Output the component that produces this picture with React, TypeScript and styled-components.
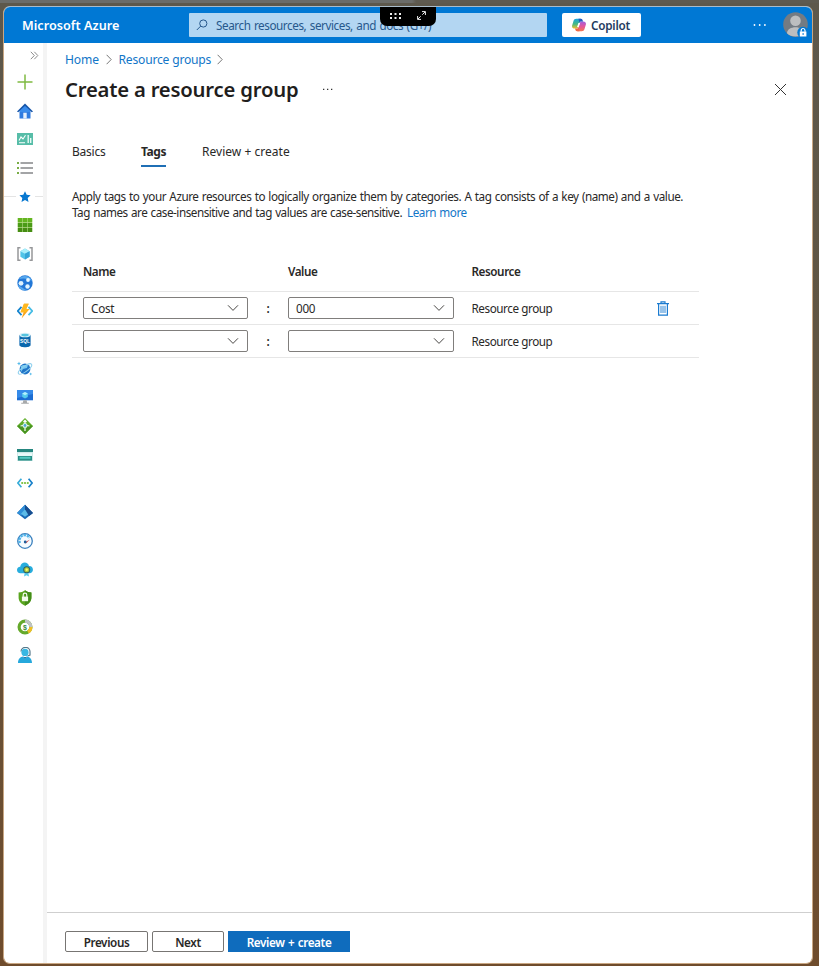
import React from "react";
import styled, { createGlobalStyle } from "styled-components";

const Global = createGlobalStyle`
  * { box-sizing: border-box; }
  body { margin: 0; background: #625848; font-family: "Noto Sans", "Open Sans", sans-serif; font-size: 11.7px; color: #292827; }
  button { font: inherit; }
`;

const Desktop = styled.div`
  width: 819px; height: 966px; padding: 6px 6px 2px 3px; overflow: hidden;
  background:
    linear-gradient(90deg, #6b6c69 0 412px, #5e5a50 416px) top / 100% 3px no-repeat,
    linear-gradient(180deg, #5d584c 0, #62543f 45%, #6f4c2c 100%);
  position: relative;
`;
const Window = styled.div`
  height: 958px; border: 1px solid #c9a783; border-top-color: #a9bccb; border-radius: 7px;
  background: #fff; overflow: hidden; display: flex; flex-direction: column;
`;
const Header = styled.header`
  height: 36px; flex: none; background: #0078d4; color: #fff;
  display: flex; align-items: center; padding-left: 18px;
`;
const Brand = styled.div`
  width: 167px; font-size: 12.6px; font-weight: 600; letter-spacing: 0.04px; white-space: nowrap;
`;
const Search = styled.div`
  width: 358px; height: 24px; background: #b3d6f2; color: #27588c; border-radius: 1px;
  display: flex; align-items: center; padding-left: 7px; gap: 8px; white-space: nowrap; letter-spacing: -0.42px; word-spacing: 0.8px;
`;
const Copilot = styled.button`
  margin: 0 0 0 15px; padding: 0 0 0 10px; width: 79px; height: 24px; border: 0; border-radius: 2px; background: #fff;
  color: #243a5e; font-weight: 600; display: flex; align-items: center; gap: 5px; letter-spacing: -0.22px;
`;
const HeaderMore = styled.div`margin-left: 112px; width: 14px; height: 14px; display: flex;`;
const Avatar = styled.div`margin-left: 16px; width: 26px; height: 26px; display: flex;`;
const ShareHandle = styled.div`
  position: absolute; left: 380px; top: 7px; width: 56px; height: 19px; background: #000;
  border-radius: 0 0 7px 7px; display: flex; justify-content: space-between; align-items: center; padding: 0 10px 2px;
`;
const Body = styled.div`flex: 1; min-height: 0; display: flex;`;
const Sidebar = styled.nav`
  width: 43px; flex: none; border-right: 4px solid #f4f4f4; display: flex; flex-direction: column; align-items: stretch;
`;
const Expand = styled.div`height: 24.6px; padding: 8px 0 0 26px; display: flex; align-items: flex-start;`;
const SideItem = styled.div<{ $ruled?: boolean }>`
  height: 28.68px; flex: none; padding-left: 13px; display: flex; align-items: center;
  background: ${(p) =>
    p.$ruled
      ? "linear-gradient(90deg, #e4e4e4 0 12px, transparent 12px 31px, #e4e4e4 31px) 0 14px / 100% 1px no-repeat"
      : "none"};
`;
const Main = styled.main`flex: 1; min-width: 0; display: flex; flex-direction: column;`;
const Crumbs = styled.div`
  height: 33px; padding-left: 18px; display: flex; align-items: center; color: #1276c8; font-size: 12.1px;
`;
const Crumb = styled.span<{ $w: number; $ls: number }>`width: ${(p) => p.$w}px; letter-spacing: ${(p) => p.$ls}px; white-space: nowrap;`;
const CrumbArrow = styled.span`width: 20px; display: flex; justify-content: center;`;
const TitleRow = styled.div`height: 26px; padding: 0 25px 0 18px; display: flex; align-items: center;`;
const Title = styled.h1`
  margin: 0; width: 257px; font-size: 20.3px; line-height: 26px; font-weight: 600; letter-spacing: -0.21px; white-space: nowrap; color: #1f1e1d;
`;
const TitleMore = styled.div`height: 14px; display: flex; flex: 1;`;
const Tabs = styled.div`height: 51px; margin: 35px 0 0 25px; display: flex; gap: 36px; font-size: 12px;`;
const Tab = styled.div<{ $active?: boolean; $w: number; $ls: number }>`
  width: ${(p) => p.$w}px; height: 30px; line-height: 29px; white-space: nowrap; letter-spacing: ${(p) => p.$ls}px;
  border-bottom: 2px solid ${(p) => (p.$active ? "#1f6fb5" : "transparent")};
  font-weight: ${(p) => (p.$active ? 700 : 400)};
`;
const Intro = styled.p<{ $ls: number }>`
  margin: 0 0 0 25px; line-height: 16px; white-space: nowrap; letter-spacing: ${(p) => p.$ls}px; word-spacing: 0.7px;
`;
const Link = styled.span`color: #1276c8; margin-left: 5px;`;
const Table = styled.div`width: 627px; margin: 32px 0 0 25px;`;
const Row = styled.div<{ $head?: boolean }>`
  height: ${(p) => (p.$head ? 40 : 33)}px; border-bottom: 1px solid #e6e6e6; padding: 0 0 ${(p) => (p.$head ? 1 : 0)}px 11px;
  display: grid; grid-template-columns: 165px 40px 166px 17.5px 185.5px 1fr; align-items: center;
  font-weight: ${(p) => (p.$head ? 600 : 400)}; white-space: nowrap; letter-spacing: -0.43px;
`;
const Combo = styled.div`
  height: 22px; border: 1px solid #807e7c; border-radius: 2px; padding: 0 8px 0 7px; display: flex; align-items: center; justify-content: space-between;
  letter-spacing: -0.25px;
`;
const Center = styled.div`text-align: center; font-weight: 600;`;
const Footer = styled.footer`
  margin-top: auto; height: 51px; border-top: 1px solid #cfcfcf; padding: 18px 0 0 18px; display: flex; gap: 4px;
`;
const Button = styled.button<{ $w: number; $primary?: boolean }>`
  width: ${(p) => p.$w}px; height: 21px; padding: 1px 0 0; border-radius: ${(p) => (p.$primary ? 0 : 2)}px; line-height: 17px; font-weight: 600; white-space: nowrap;
  letter-spacing: -0.38px; word-spacing: 0.8px;
  border: 1px solid ${(p) => (p.$primary ? "#0f6cbd" : "#777573")};
  background: ${(p) => (p.$primary ? "#0f6cbd" : "#fff")}; color: ${(p) => (p.$primary ? "#fff" : "#292827")};
`;

const Svg = ({ children, size = 16 }: { children: React.ReactNode; size?: number }) => (
  <svg width={size} height={size} viewBox="0 0 16 16" fill="none">{children}</svg>
);
const Dots = ({ color }: { color: string }) => (
  <svg width="14" height="14" viewBox="0 0 14 14" fill={color}>
    <circle cx="1.5" cy="7" r="0.9" /><circle cx="6.7" cy="7" r="0.9" /><circle cx="11.9" cy="7" r="0.9" />
  </svg>
);
const Chevron = () => (
  <svg width="12" height="8" viewBox="0 0 12 8" fill="none" stroke="#4a4846"><path d="M1 1.3 6 6.4 11 1.3" /></svg>
);

const icons: React.ReactNode[] = [
  <path d="M8 .5v15M.5 8h15" stroke="#7fba42" strokeWidth="1.5" />,
  <>
    <path d="M2.5 7v8.5h11V7L8 2z" fill="#2f7be0" />
    <path d="M6.3 9.8h3.4v5.7H6.3z" fill="#e4f0fc" />
    <path d="M0 8.5 8 .4l8 8.1-1.2.8L8 3.2 1.2 9.3z" fill="#1555a8" />
    <path d="M3 7.5 8 3l5 4.5V9H3z" fill="#398cec" />
  </>,
  <>
    <path d="M0 2h16v12H0z" fill="#57bda8" />
    <path d="M2 9.5 4 6l2 2 2.5-3.8M2 11.8h6" stroke="#fff" strokeWidth="1.1" />
    <path d="M10.5 4h1.4v8h-1.4zM13 7h1.4v5H13z" fill="#e8fbf6" />
  </>,
  <>
    <path d="M3.5 3H16M3.5 8H16M3.5 13H16" stroke="#858789" strokeWidth="1.5" />
    <path d="M0 2h2v2H0zM0 7h2v2H0zM0 12h2v2H0z" fill="#79ad46" />
  </>,
  <path d="m8 2.2 1.7 3.6 3.9.5-2.9 2.7.8 3.9L8 11l-3.5 1.9.8-3.9-2.9-2.7 3.9-.5z" fill="#0878d0" />,
  <>
    <path d="M.8 1h14.4v14H.8z" fill="#b8dc8d" />
    <path d="M.8 1h4.4v4.2H.8zM5.8 1h4.4v4.2H5.8zM10.8 1h4.4v4.2h-4.4z" fill="#64b520" />
    <path d="M.8 5.9h4.4v4.2H.8zM5.8 5.9h4.4v4.2H5.8zM10.8 5.9h4.4v4.2h-4.4z" fill="#4b9b17" />
    <path d="M.8 10.8h4.4V15H.8zM5.8 10.8h4.4V15H5.8zM10.8 10.8h4.4V15h-4.4z" fill="#468d13" />
  </>,
  <>
    <path d="M3.5 1.7H1v12.6h2.5M12.5 1.7H15v12.6h-2.5" stroke="#969799" strokeWidth="1.5" />
    <path d="m8 2.6 4.6 2.6v5.6L8 13.4l-4.6-2.6V5.2z" fill="#50c4e8" />
    <path d="m8 2.6 4.6 2.6L8 7.8 3.4 5.2z" fill="#a9effa" /><path d="M8 7.8v5.6l4.6-2.6V5.2z" fill="#35a5d6" />
  </>,
  <>
    <circle cx="8" cy="8" r="7.7" fill="#2378d7" />
    <path d="M2 4C6-1 13 1 15 6c-5-3-9-3-13-2M1 10c4 2 7 5 9 5-5 1-8-1-9-5" fill="#58a9ee" />
    <circle cx="4" cy="8.3" r="2.4" fill="#dff3ff" /><circle cx="11" cy="5" r="1.9" fill="#e9f8ff" /><circle cx="10.5" cy="11.5" r="2.2" fill="#e0f4ff" />
  </>,
  <>
    <path d="M4.5 3.8.8 8l3.7 4.2" stroke="#1685ce" strokeWidth="1.8" />
    <path d="M11.5 3.8 15.2 8l-3.7 4.2" stroke="#46bce5" strokeWidth="1.8" />
    <path d="M7 .7h4.7L9.2 6h3.3L4.6 15.4l2-6.2H3.5z" fill="#f7a51c" />
    <path d="M7 .7h4.7L9.2 6h3.3L9 9.3H3.5z" fill="#ffb81f" />
  </>,
  <>
    <path d="M2.4 3v10c0 3 11.2 3 11.2 0V3z" fill="#0a67ad" />
    <ellipse cx="8" cy="3" rx="5.6" ry="2.3" fill="#d9f1f8" /><ellipse cx="8" cy="3.1" rx="3.8" ry="1.3" fill="#57c4df" />
    <text x="8" y="10.8" textAnchor="middle" fontFamily="Liberation Sans" fontWeight="700" fontSize="4.8" fill="#fff">SQL</text>
  </>,
  <>
    <circle cx="8" cy="8" r="5.4" fill="#2174c7" /><path d="M4 5c3-2 5 0 7-1l-1 3-4 1-2 3z" fill="#75c8ef" />
    <ellipse cx="8" cy="8" rx="8" ry="2.6" transform="rotate(-36 8 8)" stroke="#8fd0ee" strokeWidth="1.1" />
    <path d="M2 .6 2.6 2l1.4.6-1.4.6L2 4.6l-.6-1.4L0 2.6 1.4 2zM13.7 11.5l.5 1 1 .5-1 .5-.5 1-.5-1-1-.5 1-.5z" fill="#52b9e9" />
  </>,
  <>
    <path d="M0 1h16v10.3H0z" fill="#1c6dd2" /><path d="M0 1h16v4L0 9z" fill="#368be9" />
    <path d="m8 3 2.8 1.6v3.3L8 9.6 5.2 7.9V4.6z" fill="#54cbed" /><path d="m8 3 2.8 1.6L8 6.3 5.2 4.6z" fill="#b3f1fc" />
    <path d="M6.3 11.3h3.4l.4 2.5h1.7v1H4.2v-1h1.7z" fill="#a7a9ab" />
  </>,
  <>
    <path d="m8 0 8 8-8 8-8-8z" fill="#5fae26" /><path d="m0 8 8 8 8-8-8-2z" fill="#489420" />
    <path d="M8 10v3M6 7.5 3.5 8M10 7.5l2.5.5M8 2.5v3M6.5 4 8 2.3 9.5 4" stroke="#fff" strokeWidth="1.2" />
    <circle cx="8" cy="7.5" r="2.5" fill="#ddf5df" /><circle cx="8" cy="7.5" r="1.4" fill="#4fa9d7" />
  </>,
  <>
    <path d="M0 2h16v3H0z" fill="#25867f" /><path d="M0 5h16v9H0z" fill="#cfe9e8" />
    <path d="M1 6.2h14v2.6H1z" fill="#e9fbfa" /><path d="M1 9h14v4.6H1z" fill="#278e86" /><path d="M2.5 9.8h11v2H2.5z" fill="#53c9c1" />
  </>,
  <>
    <path d="M4.4 3.7.9 8l3.5 4.3" stroke="#36acd8" strokeWidth="1.7" /><path d="M11.6 3.7 15.1 8l-3.5 4.3" stroke="#1881ca" strokeWidth="1.7" />
    <circle cx="5.2" cy="8" r="1.1" fill="#76bd36" /><circle cx="8" cy="8" r="1.1" fill="#76bd36" /><circle cx="10.8" cy="8" r="1.1" fill="#76bd36" />
  </>,
  <>
    <path d="M8 .8 16 9l-8 6.2L0 9z" fill="#1969b5" /><path d="M8 .8 0 9l4 2.6 8-6.7z" fill="#2f8fd8" />
    <path d="m8 5.2 4 4.5-4 3-4-3z" fill="#5cbbe8" /><path d="M8 .8 16 9l-4 3-4-6.8z" fill="#174d8f" />
  </>,
  <>
    <circle cx="8" cy="8" r="7.3" fill="#f5fbff" stroke="#3b80be" strokeWidth="1.3" />
    <path d="M3 10A5.2 5.2 0 0 1 12.5 5" stroke="#52b4e9" strokeWidth="2.4" strokeDasharray="2.4 .8" />
    <path d="m8 9.3 5-2.7-4.1 4z" fill="#df4c48" /><circle cx="8.2" cy="9" r="1.4" fill="#205e9b" />
  </>,
  <>
    <path d="M3.5 12.3C-1.5 11.8-.7 5.7 3.2 5.7 4.3.2 11.2.5 12 5.1c5-.2 5.3 6.8.5 7.2z" fill="#28addd" />
    <path d="m8 10-1 5.4 2.5-1.2 2.5 1.2-1-5.4z" fill="#54caed" /><circle cx="9.7" cy="8.7" r="3.5" fill="#315f61" />
    <circle cx="9.7" cy="8.7" r="2.5" fill="#a6c93c" /><circle cx="9.7" cy="8.7" r="1.2" fill="#fff36b" />
  </>,
  <>
    <path d="M8 .3c2 1.7 4 2 6.4 2.1v5.2c0 4.2-2.8 6.4-6.4 8.2-3.6-1.8-6.4-4-6.4-8.2V2.4C4 2.3 6 2 8 .3" fill="#5aa51f" />
    <path d="M8 .3C10 2 12 2.3 14.4 2.4v5.2c0 4.2-2.8 6.4-6.4 8.2z" fill="#438d18" />
    <path d="M4.9 6.6h6.2v4.6H4.9z" fill="#f3fbed" /><path d="M6.2 7V5a1.8 1.8 0 0 1 3.6 0v2" stroke="#f3fbed" strokeWidth="1.2" />
  </>,
  <>
    <circle cx="8" cy="8" r="5.9" fill="#fff" stroke="#65a92b" strokeWidth="3.2" />
    <path d="M8 2.1A5.9 5.9 0 0 1 13.9 8" stroke="#c0c2c4" strokeWidth="3.2" /><path d="M13.9 8A5.9 5.9 0 0 1 11 13.1" stroke="#f0bf24" strokeWidth="3.2" />
    <text x="8" y="10.6" textAnchor="middle" fontFamily="Liberation Sans" fontWeight="700" fontSize="7" fill="#3b8a3e">$</text>
  </>,
  <>
    <path d="M4 4.5a4.3 4.3 0 0 1 9 .6V8L10.5 9" stroke="#56788a" strokeWidth="1.2" />
    <circle cx="8" cy="5.4" r="3.6" fill="#37b7e3" /><path d="M1 16c0-4.5 2.8-6.3 4.8-6.6L8 11.7l2.2-2.3c2 .3 4.8 2.1 4.8 6.6z" fill="#26a8dc" />
    <path d="m5.8 9.4 2.2.8 2.2-.8L8 12z" fill="#136ea8" />
  </>,
];

const CopilotLogo = () => (
  <Svg size={14}>
    <defs>
      <linearGradient id="cool" x1="0" y1="0" x2="0" y2="1"><stop stopColor="#18a6e0" /><stop offset=".55" stopColor="#45b984" /><stop offset="1" stopColor="#f0c12e" /></linearGradient>
      <linearGradient id="warm" x1="0" y1="0" x2="0" y2="1"><stop stopColor="#a05fe0" /><stop offset=".5" stopColor="#e4569c" /><stop offset="1" stopColor="#f4774e" /></linearGradient>
    </defs>
    <path d="M5 .8h5L7.2 9.8C6.7 11.4 6.2 12 4.8 12H3C.6 12-.4 10.2.2 8.2l1.5-4.9C2.2 1.6 3.2.8 5 .8" fill="url(#cool)" />
    <path d="M11 15.2H6l2.8-9C9.3 4.6 9.8 4 11.2 4H13c2.4 0 3.4 1.8 2.8 3.8l-1.5 4.9c-.5 1.7-1.5 2.5-3.3 2.5" fill="url(#warm)" />
    <path d="M7.4.8h2.8c1.5 0 1.9 1.4 2.5 3.2h-2c-1.3 0-1.7.6-2.1 1.8z" fill="#2458bf" />
    <path d="M8.6 15.2H5.8c-1.5 0-1.9-1.4-2.4-3.2h1.8c1.2 0 1.7-.6 2.1-1.8z" fill="#ee6a45" />
    <path d="m7.3 5.6 1.9.1-1.5 4.7-1.9-.1z" fill="#fff" />
  </Svg>
);

const Trash = () => (
  <svg width="12" height="15" viewBox="0 0 12 15" fill="none" stroke="#1b7bd0" strokeWidth="1.2">
    <path d="M0 2.6h12M4 2.3V.8h4v1.5M1.6 2.6v11.6h8.8V2.6" /><path d="M4 4.8V12M6 4.8V12M8 4.8V12" strokeWidth="0.9" />
  </svg>
);

export default function App() {
  return (
    <Desktop>
      <Global />
      <Window>
        <Header>
          <Brand>Microsoft Azure</Brand>
          <Search>
            <svg width="12" height="12" viewBox="0 0 12 12" fill="none" stroke="#27588c"><circle cx="7.3" cy="4.5" r="3.6" /><path d="M4.7 7.1.8 11" /></svg>
            Search resources, services, and docs (G+/)
          </Search>
          <Copilot><CopilotLogo />Copilot</Copilot>
          <HeaderMore><Dots color="#fff" /></HeaderMore>
          <Avatar>
            <svg width="26" height="26" viewBox="0 0 26 26">
              <circle cx="12.5" cy="12.5" r="12.3" fill="#737b83" /><circle cx="12.5" cy="8.7" r="5.3" fill="#bcbec0" />
              <path d="M4 21.2c0-8 17-8 17 0-4 4.3-13 4.3-17 0" fill="#bcbec0" />
              <circle cx="20" cy="20.5" r="5.7" fill="#0078d4" /><path d="M16.8 19.5h6.6v5h-6.6z" fill="#fff" />
              <path d="M18.2 19.7v-1.3a1.9 1.9 0 0 1 3.8 0v1.3" fill="none" stroke="#fff" strokeWidth="1.2" /><path d="M20.1 21v2" stroke="#0078d4" />
            </svg>
          </Avatar>
        </Header>
        <Body>
          <Sidebar>
            <Expand><svg width="9" height="9" viewBox="0 0 9 9" fill="none" stroke="#8b8b8b"><path d="m.8.8 3.5 3.7L.8 8.2M4.3.8l3.5 3.7-3.5 3.7" /></svg></Expand>
            {icons.map((icon, i) => <SideItem key={i} $ruled={i === 4}><Svg>{icon}</Svg></SideItem>)}
          </Sidebar>
          <Main>
            <Crumbs>
              <Crumb $w={33.5} $ls={-0.1}>Home</Crumb>
              <CrumbArrow><svg width="6" height="11" viewBox="0 0 6 11" fill="none" stroke="#777"><path d="m.6.8 4.6 4.7-4.6 4.7" /></svg></CrumbArrow>
              <Crumb $w={91.5} $ls={-0.2}>Resource groups</Crumb>
              <CrumbArrow><svg width="6" height="11" viewBox="0 0 6 11" fill="none" stroke="#777"><path d="m.6.8 4.6 4.7-4.6 4.7" /></svg></CrumbArrow>
            </Crumbs>
            <TitleRow>
              <Title>Create a resource group</Title>
              <TitleMore><svg width="12" height="14" viewBox="0 0 12 14" fill="#333"><path d="M1 6.8h1.3v1.3H1zM5 6.8h1.3v1.3H5zM9 6.8h1.3v1.3H9z" /></svg></TitleMore>
              <svg width="13" height="13" viewBox="0 0 13 13" fill="none" stroke="#333"><path d="m1 1 11 11M12 1 1 12" /></svg>
            </TitleRow>
            <Tabs>
              <Tab $w={33} $ls={-0.25}>Basics</Tab>
              <Tab $w={25} $ls={-0.4} $active>Tags</Tab>
              <Tab $w={88} $ls={0.03}>Review + create</Tab>
            </Tabs>
            <Intro $ls={-0.44}>Apply tags to your Azure resources to logically organize them by categories. A tag consists of a key (name) and a value.</Intro>
            <Intro $ls={-0.47}>Tag names are case-insensitive and tag values are case-sensitive.<Link>Learn more</Link></Intro>
            <Table>
              <Row $head><span>Name</span><span /><span>Value</span><span /><span>Resource</span><span /></Row>
              <Row><Combo>Cost<Chevron /></Combo><Center>:</Center><Combo>000<Chevron /></Combo><span /><span>Resource group</span><Trash /></Row>
              <Row><Combo><span /><Chevron /></Combo><Center>:</Center><Combo><span /><Chevron /></Combo><span /><span>Resource group</span><span /></Row>
            </Table>
            <Footer>
              <Button $w={83}>Previous</Button><Button $w={72}>Next</Button><Button $w={122} $primary>Review + create</Button>
            </Footer>
          </Main>
        </Body>
      </Window>
      <ShareHandle>
        <svg width="12" height="8" viewBox="0 0 12 8" fill="#eee"><path d="M0 1h2v2H0zM4.5 1h2v2h-2zM9 1h2v2H9zM0 5h2v2H0zM4.5 5h2v2h-2zM9 5h2v2H9z" /></svg>
        <svg width="9" height="9" viewBox="0 0 9 9" fill="none" stroke="#eee"><path d="M5 .6h3.4V4M8.2.8 5.3 3.7M4 8.4H.6V5M.8 8.2l2.9-2.9" /></svg>
      </ShareHandle>
    </Desktop>
  );
}
